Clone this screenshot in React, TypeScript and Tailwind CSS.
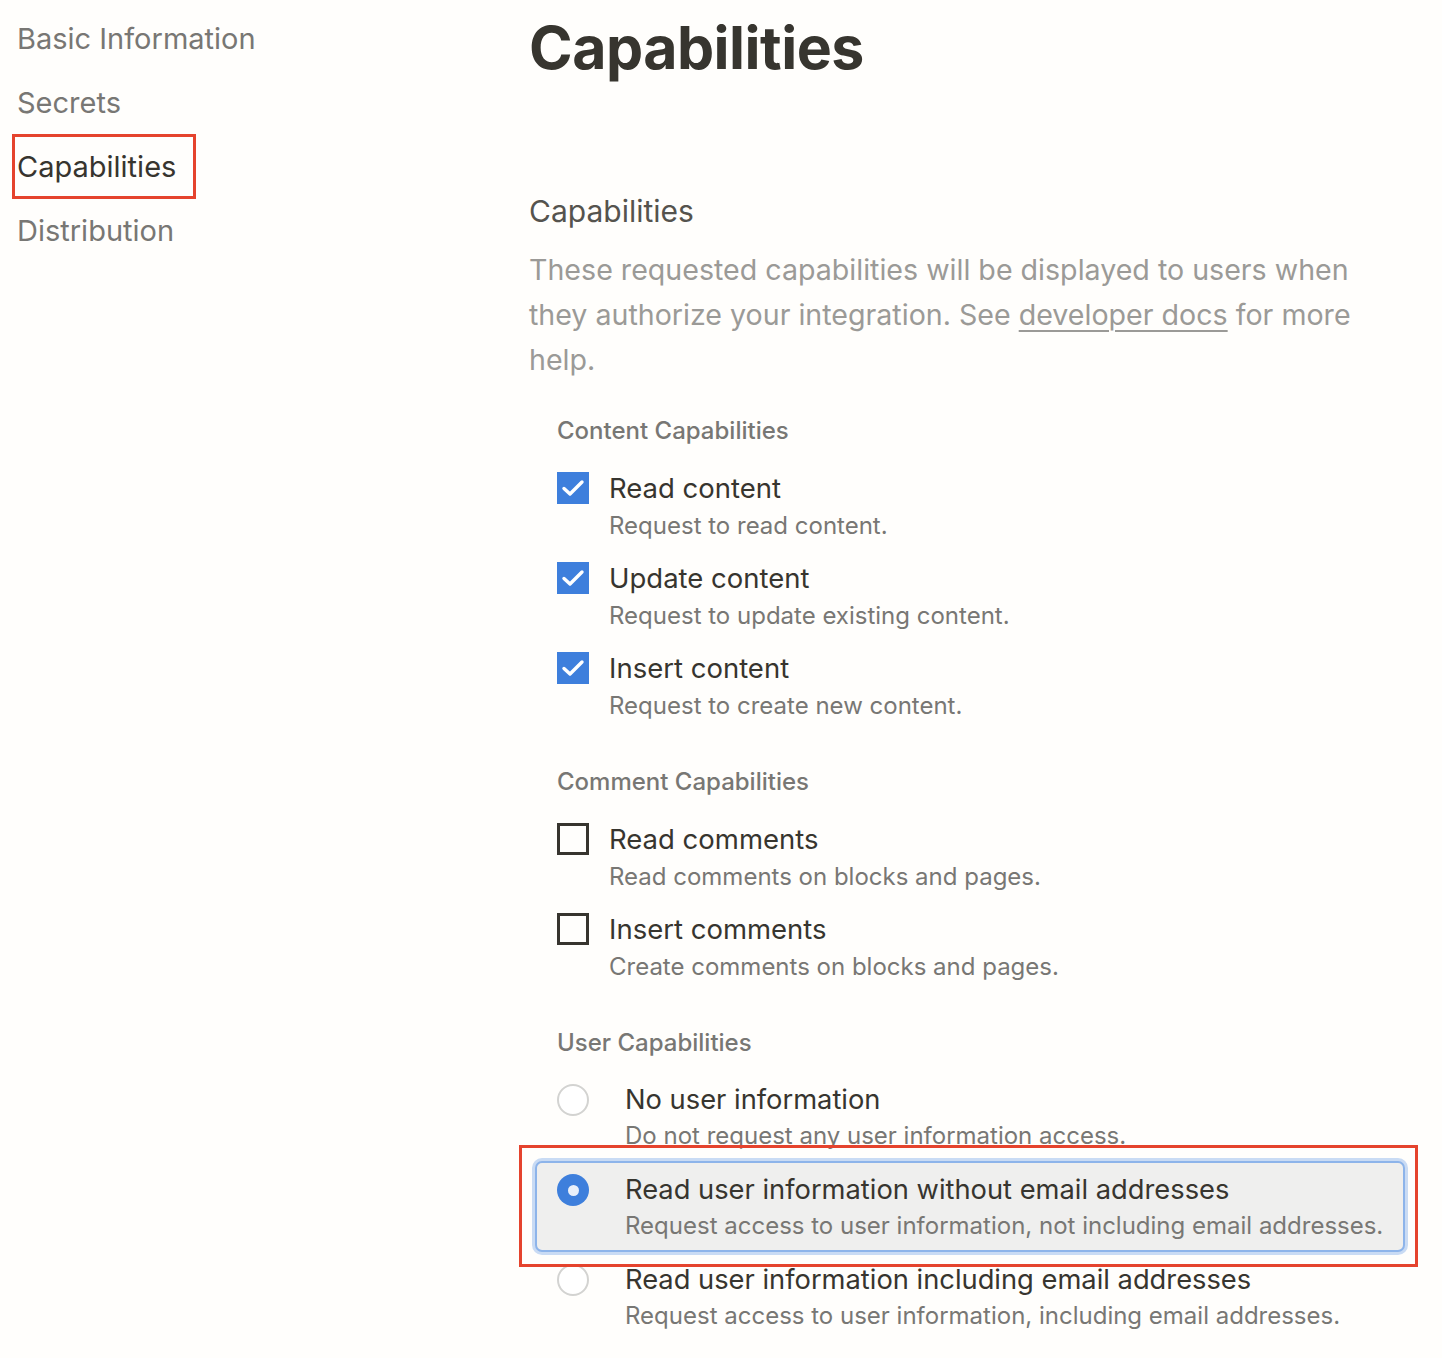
import type { ReactNode } from "react";

const font = { fontFamily: "Inter, 'Noto Sans', sans-serif" };

function Checkbox({ checked }: { checked: boolean }) {
  if (checked) {
    return (
      <div className="flex h-[32px] w-[32px] shrink-0 items-center justify-center bg-[#3e7fdc]">
        <svg width="32" height="32" viewBox="0 0 32 32" fill="none">
          <path d="M7 16.5l6 5.5 12-12" stroke="white" strokeWidth="3.4" strokeLinecap="round" strokeLinejoin="round" />
        </svg>
      </div>
    );
  }
  return <div className="h-[32px] w-[32px] shrink-0 border-[3px] border-[#37352f]" />;
}

function Radio({ checked }: { checked: boolean }) {
  if (checked) {
    return (
      <div className="flex h-[32px] w-[32px] shrink-0 items-center justify-center rounded-full bg-[#3e7fdc]">
        <div className="h-[11px] w-[11px] rounded-full bg-[#e9f0fa]" />
      </div>
    );
  }
  return <div className="h-[32px] w-[32px] shrink-0 rounded-full border-2 border-[#d3d3d1] bg-white" />;
}

function CheckItem({ checked, label, desc }: { checked: boolean; label: string; desc: string }) {
  return (
    <div className="mt-[19px] flex first:mt-[24px]">
      <div className="flex h-[36px] w-[52px] shrink-0 items-center">
        <Checkbox checked={checked} />
      </div>
      <div className="whitespace-nowrap">
        <div className="text-[27.5px] leading-[36px] text-[#37352f]">{label}</div>
        <div className="mt-[5px] text-[24px] leading-[30px] text-[#787774]">{desc}</div>
      </div>
    </div>
  );
}

function RadioItem({
  checked,
  label,
  desc,
  children,
}: {
  checked: boolean;
  label: string;
  desc: string;
  children?: ReactNode;
}) {
  return (
    <div
      className={
        "relative -mx-[22px] flex first:mt-[24px] " +
        (checked
          ? "-mb-[9px] mt-[10px] rounded-[7px] border-2 border-[#8db4ea] bg-[#efefee] px-[20px] py-[9px] shadow-[0_0_0_3px_#c9dbf4]"
          : "mt-[19px] px-[22px]")
      }
    >
      <div className="flex h-[36px] w-[68px] shrink-0 items-center">
        <Radio checked={checked} />
      </div>
      <div className="whitespace-nowrap">
        <div className="text-[27.3px] leading-[36px] text-[#37352f]">{label}</div>
        <div className="mt-[3px] text-[24px] leading-[30px] text-[#787774]">{desc}</div>
      </div>
      {children}
    </div>
  );
}

function SectionLabel({ children, first }: { children: ReactNode; first?: boolean }) {
  return (
    <div
      className={
        (first ? "mt-[34px]" : "mt-[46px]") +
        " text-[24px] font-medium leading-[30px] text-[#787774]"
      }
    >
      {children}
    </div>
  );
}

export default function App() {
  return (
    <div className="min-h-[1358px] w-full bg-[#fffefc]" style={font}>
      <div className="flex">
        <div className="w-[529px] shrink-0 pl-[17px] pt-[7px]">
          {["Basic Information", "Secrets", "Capabilities", "Distribution"].map((item) => (
            <div key={item} className="flex h-[64px] items-center">
              {item === "Capabilities" ? (
                <span className="relative text-[29px] text-[#37352f]">
                  {item}
                  <span className="absolute -bottom-[10px] -left-[5px] -right-[20px] -top-[11px] border-[3px] border-[#e5432d]" />
                </span>
              ) : (
                <span className="text-[29px] text-[#787774]">{item}</span>
              )}
            </div>
          ))}
        </div>

        <div className="w-[854px] pt-[12px]">
          <h1 className="text-[59px] font-bold leading-[72px] tracking-[-0.5px] text-[#37352f]">Capabilities</h1>
          <h2 className="mt-[107px] text-[30px] leading-[40px] text-[#55534e]">Capabilities</h2>
          <p className="mt-[16px] whitespace-nowrap text-[28.6px] leading-[45px] text-[#9b9a97]">
            These requested capabilities will be displayed to users when
            <br />
            they authorize your integration. See{" "}
            <span className="underline decoration-[2px] underline-offset-[5px]">developer docs</span> for more
            <br />
            help.
          </p>

          <div className="pl-[28px]">
            <SectionLabel first>Content Capabilities</SectionLabel>
            <div>
              <CheckItem checked label="Read content" desc="Request to read content." />
              <CheckItem checked label="Update content" desc="Request to update existing content." />
              <CheckItem checked label="Insert content" desc="Request to create new content." />
            </div>

            <SectionLabel>Comment Capabilities</SectionLabel>
            <div>
              <CheckItem checked={false} label="Read comments" desc="Read comments on blocks and pages." />
              <CheckItem checked={false} label="Insert comments" desc="Create comments on blocks and pages." />
            </div>

            <SectionLabel>User Capabilities</SectionLabel>
            <div>
              <RadioItem checked={false} label="No user information" desc="Do not request any user information access." />
              <RadioItem
                checked
                label="Read user information without email addresses"
                desc="Request access to user information, not including email addresses."
              >
                <span className="pointer-events-none absolute -bottom-[17px] -left-[18px] -right-[15px] -top-[18px] z-10 border-[3px] border-[#e5432d]" />
              </RadioItem>
              <RadioItem
                checked={false}
                label="Read user information including email addresses"
                desc="Request access to user information, including email addresses."
              />
            </div>
          </div>
        </div>
      </div>
    </div>
  );
}
